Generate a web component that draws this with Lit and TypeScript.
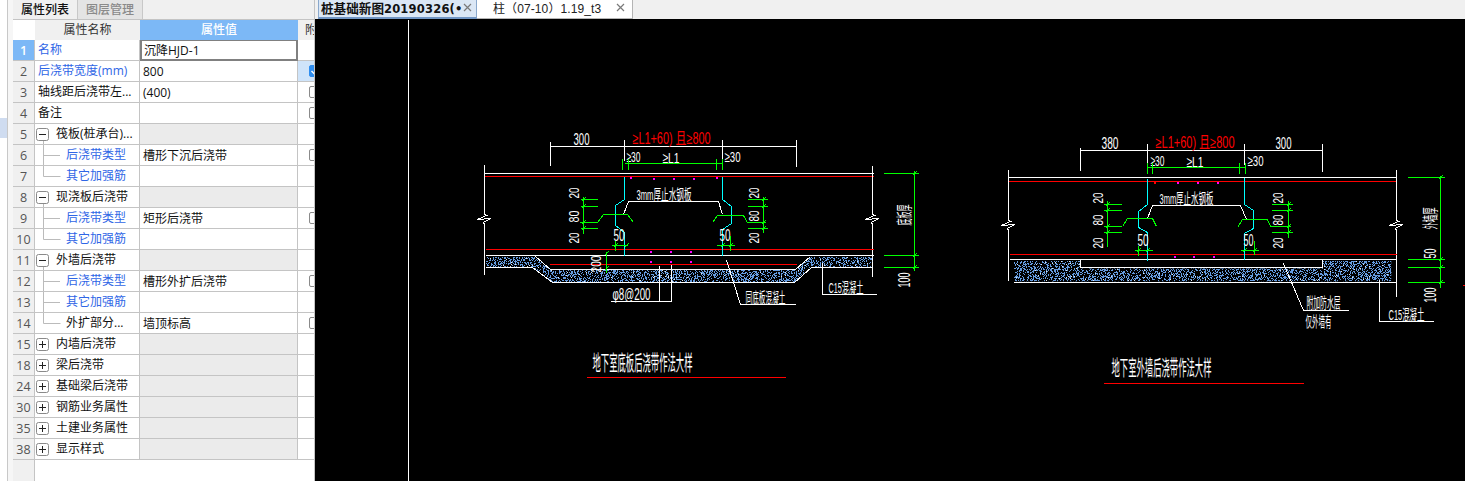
import {LitElement, html, svg, css} from 'lit';
import {customElement} from 'lit/decorators.js';

const WHITE = '#ffffff';
const RED = '#ff0000';
const GREEN = '#00ff00';
const CYAN = '#00ffff';
const MAGENTA = '#ff00ff';

type Pt = number[];

// drawn with screen coordinates, the viewBox of the svg starts at the canvas corner
const line = (color: string, ...pts: Pt[]) =>
  svg`<polyline points=${pts.map((p) => p.join(',')).join(' ')} stroke=${color} fill="none"></polyline>`;

const label = (x: number, y: number, w: number, size: number, text: string, color = WHITE) =>
  svg`<text x=${x} y=${y} font-size=${size} fill=${color} textLength=${w} lengthAdjust="spacingAndGlyphs">${text}</text>`;

const vlabel = (x: number, y: number, len: number, size: number, text: string, color = WHITE) =>
  svg`<text transform="translate(${x} ${y}) rotate(-90)" font-size=${size} fill=${color} textLength=${len} lengthAdjust="spacingAndGlyphs">${text}</text>`;

const breakLine = (x: number, top: number, y: number, bottom: number) =>
  line(WHITE, [x, top], [x, y - 5], [x + 2, y - 4], [x - 7, y], [x + 6, y - 1], [x - 1, y + 3], [x, y + 5], [x, bottom]);

const dots = (color: string, pts: Pt[], size = 2) =>
  svg`<path d=${pts.map(([x, y]) => `M${x - 0.5} ${y - 0.5}h${size}v${size}h${-size}z`).join('')} fill=${color}></path>`;

// little slanted ticks where a dimension line meets its witness line
const crosses = (pts: Pt[]) =>
  svg`<path d=${pts.map(([x, y]) => `M${x - 2} ${y + 2}L${x + 2} ${y - 2}`).join('')} stroke=${GREEN} fill="none"></path>`;

// speckle of the concrete fill, seeded so that the picture stays the same
function speckle(x0: number, y0: number, w: number, h: number, seed: number, density: number) {
  let s = seed;
  const next = () => {
    s = (s * 1103515245 + 12345) & 0x7fffffff;
    return (s >> 8) / 0x7fffff;
  };
  let d = '';
  for (let y = y0; y < y0 + h; y++) {
    for (let x = x0; x < x0 + w; x++) {
      if (next() < density) d += `M${x} ${y}h${next() < 0.3 ? 2 : 1}v1h-1z`;
    }
  }
  return d;
}

const FLOOR_HATCH = '485,256 535,256 550,269 795,269 810,256 872,256 872,267 811,267 794,282 552,282 532,267 485,267';
const WALL_HATCH = '1013,260 1080,260 1080,268 1322,268 1322,260 1391,260 1391,281 1013,281';

@customElement('cad-canvas')
export class CadCanvas extends LitElement {
  static styles = css`
    :host {
      display: block;
      flex: 1;
      background: #000;
      overflow: hidden;
    }
    svg {
      display: block;
      shape-rendering: crispEdges;
    }
    text {
      font-family: "Liberation Sans", "Noto Sans CJK SC", sans-serif;
    }
  `;

  private floorDetail() {
    return svg`
      ${line(WHITE, [550, 141], [550, 165])}
      ${line(WHITE, [550, 146], [796, 146])}
      ${line(WHITE, [624, 139], [624, 160])}
      ${line(WHITE, [722, 139], [722, 160])}
      ${line(WHITE, [796, 139], [796, 166])}
      ${label(573, 144, 16, 16, '300')}
      ${label(632, 143, 78, 16, '≥L1+60) 且≥800', RED)}
      ${label(626, 161, 14, 15, '≥30')}
      ${label(662, 162, 17, 15, '≥L1')}
      ${label(724, 161, 16, 15, '≥30')}
      ${line(GREEN, [624, 163], [722, 163])}
      ${line(GREEN, [622, 158], [622, 169])}
      ${line(GREEN, [628, 158], [628, 169])}
      ${line(GREEN, [716, 158], [716, 169])}
      ${line(GREEN, [722, 158], [722, 169])}

      ${line(WHITE, [484, 173], [873, 173])}
      ${line(RED, [484, 176], [873, 176])}
      ${breakLine(484, 164, 219, 274)}
      ${breakLine(872, 165, 219, 276)}
      ${line(RED, [485, 249], [873, 249])}
      ${line(WHITE, [485, 255], [873, 255])}

      ${line(CYAN, [624, 176], [624, 199], [615, 205], [615, 225], [624, 232], [624, 255])}
      ${line(CYAN, [722, 176], [722, 199], [731, 206], [731, 223], [722, 229], [722, 255])}
      ${line(WHITE, [623, 214], [628, 201], [718, 201], [722, 214])}
      ${line(GREEN, [579, 222], [597, 222], [603, 214], [627, 214], [633, 222])}
      ${line(GREEN, [712, 222], [717, 215], [743, 215], [747, 222], [765, 222])}
      ${label(636, 199, 55, 15, '3mm厚止水钢板')}

      ${line(GREEN, [583, 196], [583, 233])}
      ${line(GREEN, [580, 199], [597, 199])}
      ${line(GREEN, [580, 206], [597, 206])}
      ${line(GREEN, [580, 228], [597, 228])}
      ${crosses([[583, 199], [583, 206], [583, 222], [583, 228]])}
      ${vlabel(578, 198, 11, 15, '20')}
      ${vlabel(578, 222, 12, 15, '80')}
      ${vlabel(578, 243, 11, 15, '20')}
      ${line(GREEN, [763, 196], [763, 232])}
      ${line(GREEN, [747, 199], [767, 199])}
      ${line(GREEN, [747, 206], [767, 206])}
      ${line(GREEN, [747, 228], [767, 228])}
      ${crosses([[763, 199], [763, 206], [763, 222], [763, 228]])}
      ${vlabel(758, 198, 11, 15, '20')}
      ${vlabel(758, 221, 11, 15, '80')}
      ${vlabel(758, 243, 11, 15, '20')}

      ${label(613, 240, 11, 16, '50')}
      ${label(719, 240, 11, 16, '50')}
      ${line(GREEN, [611, 245], [627, 245])}
      ${line(GREEN, [615, 240], [615, 250])}
      ${line(GREEN, [716, 245], [734, 245])}
      ${line(GREEN, [730, 235], [730, 250])}
      ${crosses([[615, 245], [626, 245], [722, 245], [730, 245]])}

      ${dots(MAGENTA, [[630, 177], [653, 178], [673, 178], [693, 178], [716, 177], [650, 251], [670, 251], [690, 251], [650, 261], [670, 261], [690, 261]])}

      <g clip-path="url(#floor)">
        <path d=${speckle(485, 256, 388, 27, 7, 0.4)} fill="#659ce0"></path>
        <path d=${speckle(485, 256, 388, 27, 91, 0.015)} fill="#dfe8f2"></path>
      </g>
      ${line(WHITE, [485, 267], [532, 267], [552, 282], [794, 282], [811, 267], [872, 267])}
      ${line(WHITE, [535, 256], [550, 269], [795, 269], [810, 256])}
      ${line(RED, [549, 264], [796, 264])}

      ${line(GREEN, [606, 251], [606, 272])}
      ${crosses([[606, 253], [606, 268]])}
      ${vlabel(600, 272, 17, 14, '200')}
      ${line(WHITE, [590, 269], [603, 269])}

      ${label(612, 299, 38, 16, 'φ8@200')}
      ${line(WHITE, [610, 301], [671, 301], [671, 264])}
      ${line(WHITE, [659, 265], [659, 301])}
      ${line(WHITE, [726, 260], [740, 304], [795, 304])}
      ${label(745, 302, 40, 15, '同底板混凝土')}
      ${line(WHITE, [822, 262], [822, 294], [876, 294])}
      ${label(828, 292, 35, 15, 'C15混凝土')}

      ${line(GREEN, [914, 170], [914, 270])}
      ${line(GREEN, [883, 173], [918, 173])}
      ${line(GREEN, [883, 255], [918, 255])}
      ${line(GREEN, [883, 267], [918, 267])}
      ${crosses([[914, 173], [914, 255], [914, 267]])}
      ${vlabel(909, 225, 21, 16, '底板厚')}
      ${vlabel(909, 287, 15, 16, '100')}

      ${label(592, 369, 100, 21, '地下室底板后浇带作法大样')}
      ${line(RED, [586, 377], [785, 377])}
    `;
  }

  private wallDetail() {
    return svg`
      ${line(WHITE, [1080, 147], [1080, 170])}
      ${line(WHITE, [1080, 150], [1322, 150])}
      ${line(WHITE, [1147, 143], [1147, 164])}
      ${line(WHITE, [1244, 143], [1244, 164])}
      ${line(WHITE, [1322, 143], [1322, 171])}
      ${label(1101, 148, 17, 16, '380')}
      ${label(1275, 148, 16, 16, '300')}
      ${label(1155, 147, 79, 16, '≥L1+60) 且≥800', RED)}
      ${label(1150, 165, 14, 15, '≥30')}
      ${label(1186, 166, 17, 15, '≥L1')}
      ${label(1247, 165, 16, 15, '≥30')}
      ${line(GREEN, [1146, 167], [1245, 167])}
      ${line(GREEN, [1147, 162], [1147, 173])}
      ${line(GREEN, [1152, 162], [1152, 173])}
      ${line(GREEN, [1239, 162], [1239, 173])}
      ${line(GREEN, [1245, 162], [1245, 173])}

      ${line(WHITE, [1008, 177], [1396, 177])}
      ${line(RED, [1008, 181], [1396, 181])}
      ${breakLine(1008, 169, 225, 280)}
      ${breakLine(1396, 169, 225, 296)}
      ${line(RED, [1009, 254], [1396, 254])}
      ${line(WHITE, [1009, 259], [1396, 259])}

      ${line(CYAN, [1147, 178], [1147, 204], [1138, 211], [1138, 227], [1147, 232], [1147, 260])}
      ${line(CYAN, [1244, 177], [1244, 204], [1253, 210], [1253, 228], [1244, 233], [1244, 259])}
      ${line(WHITE, [1147, 218], [1152, 205], [1240, 205], [1246, 219])}
      ${line(GREEN, [1122, 226], [1127, 218], [1152, 218], [1156, 226])}
      ${line(GREEN, [1237, 227], [1242, 219], [1267, 219], [1270, 226], [1290, 226])}
      ${label(1159, 203, 54, 15, '3mm厚止水钢板')}

      ${line(GREEN, [1107, 200], [1107, 246])}
      ${line(GREEN, [1103, 204], [1121, 204])}
      ${line(GREEN, [1103, 210], [1121, 210])}
      ${line(GREEN, [1103, 226], [1121, 226])}
      ${line(GREEN, [1103, 232], [1121, 232])}
      ${crosses([[1107, 204], [1107, 210], [1107, 226], [1107, 232]])}
      ${vlabel(1102, 203, 11, 15, '20')}
      ${vlabel(1102, 225, 11, 15, '80')}
      ${vlabel(1102, 248, 11, 15, '20')}
      ${line(GREEN, [1288, 200], [1288, 237])}
      ${line(GREEN, [1271, 204], [1292, 204])}
      ${line(GREEN, [1271, 210], [1292, 210])}
      ${line(GREEN, [1271, 232], [1292, 232])}
      ${crosses([[1288, 204], [1288, 210], [1288, 226], [1288, 232]])}
      ${vlabel(1282, 203, 11, 15, '20')}
      ${vlabel(1282, 225, 11, 15, '80')}
      ${vlabel(1282, 248, 11, 15, '20')}

      ${label(1137, 245, 11, 16, '50')}
      ${label(1243, 245, 10, 16, '50')}
      ${line(GREEN, [1134, 250], [1152, 250])}
      ${line(GREEN, [1138, 245], [1138, 255])}
      ${line(GREEN, [1240, 250], [1258, 250])}
      ${line(GREEN, [1254, 240], [1254, 254])}
      ${crosses([[1138, 250], [1147, 250], [1244, 250], [1254, 250]])}

      ${dots(MAGENTA, [[1177, 182], [1197, 182], [1217, 182], [1174, 256], [1193, 256], [1213, 256]])}
      ${dots(RED, [[1154, 182]])}

      <g clip-path="url(#wall)">
        <path d=${speckle(1013, 260, 378, 22, 23, 0.4)} fill="#659ce0"></path>
        <path d=${speckle(1013, 260, 378, 22, 57, 0.015)} fill="#dfe8f2"></path>
      </g>
      ${line(WHITE, [1080, 259], [1080, 267], [1322, 267], [1322, 259])}
      ${line(WHITE, [1013, 282], [1396, 282])}

      ${line(WHITE, [1283, 263], [1303, 310], [1348, 310])}
      ${label(1306, 307, 34, 15, '附加防水层')}
      ${label(1305, 326, 26, 15, '仅外墙有')}
      ${line(WHITE, [1379, 279], [1379, 321], [1433, 321])}
      ${label(1388, 319, 36, 15, 'C15混凝土')}

      ${line(GREEN, [1440, 175], [1440, 287])}
      ${line(GREEN, [1407, 177], [1444, 177])}
      ${line(GREEN, [1407, 259], [1444, 259])}
      ${line(GREEN, [1407, 267], [1444, 267])}
      ${line(GREEN, [1407, 282], [1444, 282])}
      ${crosses([[1440, 177], [1440, 259], [1440, 267], [1440, 282]])}
      ${vlabel(1435, 229, 22, 16, '外墙厚')}
      ${vlabel(1435, 258, 10, 16, '50')}
      ${vlabel(1435, 302, 15, 16, '100')}

      ${label(1111, 374, 100, 21, '地下室外墙后浇带作法大样')}
      ${line(RED, [1103, 383], [1303, 383])}
    `;
  }

  protected render() {
    return html`
      <svg width="1150" height="462" viewBox="315 19 1150 462">
        <defs>
          <clipPath id="floor"><polygon points=${FLOOR_HATCH}></polygon></clipPath>
          <clipPath id="wall"><polygon points=${WALL_HATCH}></polygon></clipPath>
        </defs>
        <g transform="translate(.5 .5)">
          ${line(WHITE, [408, 19], [408, 481])}
          ${this.floorDetail()}
          ${this.wallDetail()}
          ${line(RED, [1462, 285], [1465, 285])}
        </g>
      </svg>
    `;
  }
}

type Row = {
  n: number;
  name: string;
  value?: string;
  blue?: boolean;
  // tree: group box, child with a branch going on, or the last child of a group
  tree?: 'open' | 'closed' | 'mid' | 'end';
  check?: boolean;
  checked?: boolean;
};

const ROWS: Row[] = [
  {n: 1, name: '名称', value: '沉降HJD-1', blue: true},
  {n: 2, name: '后浇带宽度(mm)', value: '800', blue: true, check: true, checked: true},
  {n: 3, name: '轴线距后浇带左...', value: '(400)', check: true},
  {n: 4, name: '备注', check: true},
  {n: 5, name: '筏板(桩承台)...', tree: 'open'},
  {n: 6, name: '后浇带类型', value: '槽形下沉后浇带', blue: true, tree: 'mid', check: true},
  {n: 7, name: '其它加强筋', blue: true, tree: 'end'},
  {n: 8, name: '现浇板后浇带', tree: 'open'},
  {n: 9, name: '后浇带类型', value: '矩形后浇带', blue: true, tree: 'mid', check: true},
  {n: 10, name: '其它加强筋', blue: true, tree: 'end'},
  {n: 11, name: '外墙后浇带', tree: 'open'},
  {n: 12, name: '后浇带类型', value: '槽形外扩后浇带', blue: true, tree: 'mid', check: true},
  {n: 13, name: '其它加强筋', blue: true, tree: 'mid'},
  {n: 14, name: '外扩部分...', value: '墙顶标高', tree: 'end', check: true},
  {n: 15, name: '内墙后浇带', tree: 'closed'},
  {n: 18, name: '梁后浇带', tree: 'closed'},
  {n: 24, name: '基础梁后浇带', tree: 'closed'},
  {n: 30, name: '钢筋业务属性', tree: 'closed'},
  {n: 35, name: '土建业务属性', tree: 'closed'},
  {n: 38, name: '显示样式', tree: 'closed'},
];

@customElement('prop-panel')
export class PropPanel extends LitElement {
  static styles = css`
    :host {
      display: flex;
      flex-direction: column;
      width: 302px;
      height: 481px;
      background: #fff;
      border-right: 1px solid #c4c4c4;
      box-sizing: border-box;
      font: 12px/22px "Open Sans", "Noto Sans CJK SC", sans-serif;
      color: #111;
      overflow: hidden;
    }
    .tabs {
      display: flex;
      height: 20px;
      background: #f0f0f0;
      border-bottom: 1px solid #c4c4c4;
      box-sizing: border-box;
    }
    .tab {
      width: 65px;
      box-sizing: border-box;
      text-align: center;
      line-height: 19px;
      border-right: 1px solid #c8c8c8;
      color: #111;
      font-weight: 500;
    }
    .tab.off {
      background: #e4e4e4;
      color: #8a8a8a;
    }
    .row {
      display: grid;
      grid-template-columns: 22px 105px 158px 16px;
      height: 21px;
    }
    .row > div {
      box-sizing: border-box;
      border-right: 1px solid #c4c4c4;
      border-bottom: 1px solid #c4c4c4;
      white-space: nowrap;
      overflow: hidden;
    }
    .row > .check {
      border-right: none;
      padding: 4px 0 0 11px;
    }
    .row > .num {
      background: #f0f0f0;
      color: #555;
      text-align: center;
      font-size: 12.5px;
    }
    .row > .num.current {
      background: #7cb8f6;
      color: #fff;
      font-weight: 600;
    }
    .row > .name {
      display: flex;
      align-items: center;
      padding-left: 3px;
    }
    .blue {
      color: #2f66e6;
    }
    .row > .value {
      padding-left: 3px;
    }
    .row > .value.grey {
      background: #ebebeb;
    }
    .row > .value.edit {
      border: 2px solid #808080;
      border-top: 1px solid #808080;
      padding-left: 2px;
      line-height: 20px;
    }
    .row > .check.on {
      background: #cfe4fa;
    }
    .row.head {
      height: 20px;
    }
    .row.head > div {
      text-align: center;
      line-height: 20px;
      background: #f0f0f0;
      color: #333;
      border: none;
    }
    .row.head > .corner {
      background: #fff;
    }
    .row.head > .current {
      background: #7cb8f6;
      color: #fff;
      font-weight: 500;
    }
    .row.head > .check {
      text-align: left;
      padding: 0 0 0 7px;
    }
    .box {
      display: block;
      width: 12px;
      height: 12px;
      box-sizing: border-box;
      border: 1px solid #8a8a8a;
      border-radius: 2px;
      background: #fff;
    }
    .on .box {
      background: #2f8ef0;
      border-color: #2f8ef0;
    }
    .box svg {
      display: block;
    }
    .gutter {
      display: block;
      flex: none;
      margin-left: -3px;
    }
    .filler {
      flex: 1;
      width: 21px;
      background: #f0f0f0;
      border-right: 1px solid #c4c4c4;
    }
  `;

  // expander box and tree lines of the name cell, as wide as the indent
  private gutter(tree: Row['tree']) {
    if (tree === 'open' || tree === 'closed') {
      return html`<svg class="gutter" width="21" height="20" viewBox="0 0 21 20">
        <rect x="1.5" y="4.5" width="12" height="12" rx="2" fill="#fff" stroke="#8a8a8a"></rect>
        <path d="M4 10.5h7" stroke="#222" fill="none"></path>
        ${tree === 'closed' ? svg`<path d="M7.5 7v7" stroke="#222" fill="none"></path>` : ''}
        ${tree === 'open' ? svg`<path d="M8.5 17v3" stroke="#bbb" fill="none"></path>` : ''}
      </svg>`;
    }
    return html`<svg class="gutter" width="31" height="21" viewBox="0 0 31 21">
      <path d=${tree === 'end' ? 'M8.5 0v10.5h17' : 'M8.5 0v21M9 10.5h16'} stroke="#bbb" fill="none"></path>
    </svg>`;
  }

  private renderRow(r: Row) {
    const group = r.tree === 'open' || r.tree === 'closed';
    const current = r.n === 1;
    return html`
      <div class="row">
        <div class="num ${current ? 'current' : ''}">${r.n}</div>
        <div class="name ${r.blue ? 'blue' : ''}">
          ${r.tree ? this.gutter(r.tree) : ''}<span>${r.name}</span>
        </div>
        <div class="value ${group ? 'grey' : ''} ${current ? 'edit' : ''}">${r.value ?? ''}</div>
        <div class="check ${r.checked ? 'on' : ''}">
          ${r.check
            ? html`<span class="box">
                ${r.checked
                  ? html`<svg width="10" height="10" viewBox="0 0 10 10">
                      <path d="M1.5 5l2.5 2.5 4.5-5" stroke="#fff" stroke-width="1.5" fill="none"></path>
                    </svg>`
                  : ''}
              </span>`
            : ''}
        </div>
      </div>
    `;
  }

  protected render() {
    return html`
      <div class="tabs">
        <div class="tab">属性列表</div>
        <div class="tab off">图层管理</div>
      </div>
      <div class="row head">
        <div class="corner"></div>
        <div>属性名称</div>
        <div class="current">属性值</div>
        <div class="check">附加</div>
      </div>
      ${ROWS.map((r) => this.renderRow(r))}
      <div class="filler"></div>
    `;
  }
}

@customElement('app-root')
export class AppRoot extends LitElement {
  static styles = css`
    :host {
      display: flex;
      width: 1465px;
      height: 481px;
      overflow: hidden;
      background: #fff;
      font-family: "Liberation Sans", "Noto Sans CJK SC", sans-serif;
    }
    .rail {
      width: 13px;
      flex: none;
      box-sizing: border-box;
      padding-top: 118px;
      background: linear-gradient(to right, #fff 7px, #c8c8c8 7px, #c8c8c8 8px, #f6f6f6 8px);
    }
    .rail div {
      width: 7px;
      height: 20px;
      background: #cfdcf0;
    }
    .main {
      flex: 1;
      display: flex;
      flex-direction: column;
    }
    .strip {
      display: flex;
      height: 19px;
      padding-left: 3px;
      background: #f0f0f0;
    }
    .doc {
      display: flex;
      align-items: center;
      justify-content: space-between;
      width: 156px;
      box-sizing: border-box;
      padding: 0 7px 4px 16px;
      background: #fff;
      border: 1px solid #b4b4b4;
      border-top: none;
      border-left: none;
      font-size: 12px;
      letter-spacing: 0.1px;
      color: #222;
      white-space: nowrap;
    }
    .doc.active {
      width: 159px;
      padding: 0 8px 3px 2px;
      background: #dbe7f5;
      border: 1px solid #8aa8cc;
      border-top: none;
      border-bottom: 2px solid #7196c4;
      font: bold 11.5px "DejaVu Sans", sans-serif;
      letter-spacing: 0.2px;
      color: #111;
    }
    .doc.active b {
      font: bold 12.6px "Noto Sans CJK SC", sans-serif;
      letter-spacing: 0;
    }
    .close {
      flex: none;
      display: block;
    }
  `;

  private close() {
    return html`<svg class="close" width="9" height="9" viewBox="0 0 9 9">
      <path d="M1 1l7 7M8 1l-7 7" stroke="#7a7a7a" stroke-width="1.2" fill="none"></path>
    </svg>`;
  }

  protected render() {
    return html`
      <div class="rail"><div></div></div>
      <prop-panel></prop-panel>
      <div class="main">
        <div class="strip">
          <div class="doc active">
            <span><b>桩基础新图</b>20190326(•</span>${this.close()}
          </div>
          <div class="doc"><span>柱（07-10）1.19_t3</span>${this.close()}</div>
        </div>
        <cad-canvas></cad-canvas>
      </div>
    `;
  }
}
